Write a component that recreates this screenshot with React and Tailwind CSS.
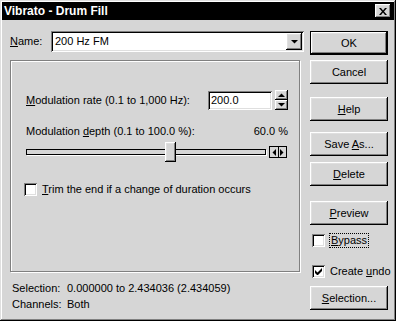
import React from "react";

const raised =
  "shadow-[inset_-1px_-1px_#000,inset_1px_1px_#fff,inset_-2px_-2px_#808080,inset_2px_2px_#dfdfdf]";
const sunken =
  "shadow-[inset_1px_1px_#808080,inset_-1px_-1px_#fff,inset_2px_2px_#000,inset_-2px_-2px_#dfdfdf]";

function Btn({ children, def, className = "" }) {
  if (def) {
    return (
      <div className={`border border-black ${className}`}>
        <div className={`flex h-[22px] items-center justify-center bg-[#d6d6d6] ${raised}`}>
          {children}
        </div>
      </div>
    );
  }
  return (
    <div className={`flex h-[24px] items-center justify-center bg-[#d6d6d6] ${raised} ${className}`}>
      {children}
    </div>
  );
}

function Check({ checked }) {
  return (
    <div className={`relative h-[13px] w-[13px] shrink-0 bg-white ${sunken}`}>
      {checked && (
        <svg className="absolute left-[3px] top-[3px]" width="7" height="7" viewBox="0 0 7 7">
          <path d="M0 2v3l2 2h1l4-4V0L2.5 4.5z" fill="#000" />
        </svg>
      )}
    </div>
  );
}

function Tri({ dir }) {
  const d = {
    up: "M0 4h7L3.5 0.5z",
    down: "M0 0h7L3.5 3.5z",
  }[dir];
  return (
    <svg width="7" height="4" viewBox="0 0 7 4">
      <path d={d} fill="#000" />
    </svg>
  );
}

export default function App() {
  return (
    <div
      className="flex h-[321px] w-[396px] flex-col whitespace-nowrap bg-[#d6d6d6] p-[2px] text-[11px] leading-[13px] text-black shadow-[inset_-1px_-1px_#000,inset_1px_1px_#dfdfdf,inset_-2px_-2px_#808080,inset_2px_2px_#fff]"
      style={{ fontFamily: '"Liberation Sans", Arial, sans-serif' }}
    >
      <div className="flex h-[18px] items-center justify-between bg-black pl-[2px] pr-[3px]">
        <span className="text-[12px] font-bold text-white">Vibrato - Drum Fill</span>
        <div className={`flex h-[14px] w-[16px] items-center justify-center bg-[#d6d6d6] ${raised}`}>
          <svg width="8" height="7" viewBox="0 0 8 7">
            <path d="M0 0h2l2 2.5L6 0h2L5 3.5 8 7H6L4 4.5 2 7H0l3-3.5z" fill="#000" />
          </svg>
        </div>
      </div>

      <div className="flex flex-1 pl-[8px] pr-[6px] pt-[11px]">
        <div className="flex w-[294px] flex-col">
          <div className="flex items-center">
            <span className="w-[41px]">
              <span className="underline">N</span>ame:
            </span>
            <div className={`flex h-[21px] flex-1 items-center bg-white pl-[4px] pr-[2px] ${sunken}`}>
              <span className="flex-1">200 Hz FM</span>
              <div className={`flex h-[17px] w-[16px] items-center justify-center bg-[#d6d6d6] ${raised}`}>
                <Tri dir="down" />
              </div>
            </div>
          </div>

          <div className="mr-[4px] mt-[8px] flex h-[212px] flex-col border border-[#808080] pl-[15px] pr-[11px] pt-[29px] shadow-[inset_1px_1px_#fff,1px_1px_#fff]">
            <div className="flex items-center justify-between">
              <span>
                <span className="underline">M</span>odulation rate (0.1 to 1,000 Hz):
              </span>
              <div className="flex items-center gap-[3px]">
                <div className={`flex h-[19px] w-[64px] items-center bg-white px-[3px] ${sunken}`}>200.0</div>
                <div className="flex flex-col">
                  <div className={`flex h-[10px] w-[13px] items-center justify-center bg-[#d6d6d6] ${raised}`}>
                    <Tri dir="up" />
                  </div>
                  <div className={`flex h-[10px] w-[13px] items-center justify-center bg-[#d6d6d6] ${raised}`}>
                    <Tri dir="down" />
                  </div>
                </div>
              </div>
            </div>

            <div className="mt-[15px] flex justify-between">
              <span>
                Modulation <span className="underline">d</span>epth (0.1 to 100.0 %):
              </span>
              <span>60.0 %</span>
            </div>

            <div className="mt-[4px] flex h-[20px] items-center">
              <div className="relative h-[6px] w-[240px] border border-black bg-[#d6d6d6] shadow-[1px_1px_#fff]">
                <div className={`absolute left-[138px] top-[-8px] h-[20px] w-[11px] bg-[#d6d6d6] ${raised}`} />
              </div>
              <div className="ml-[3px] flex h-[12px] w-[18px] items-center border border-black bg-[#d6d6d6]">
                <div className="flex flex-1 items-center justify-center">
                  <svg width="4" height="7" viewBox="0 0 4 7">
                    <path d="M4 0v7L0.5 3.5z" fill="#000" />
                  </svg>
                </div>
                <div className="h-full w-px bg-black" />
                <div className="flex flex-1 items-center justify-center">
                  <svg width="4" height="7" viewBox="0 0 4 7">
                    <path d="M0 0v7L3.5 3.5z" fill="#000" />
                  </svg>
                </div>
              </div>
            </div>

            <div className="mt-[21px] flex items-center gap-[5px]">
              <div className="-ml-[2px]">
                <Check />
              </div>
              <span>
                <span className="underline">T</span>rim the end if a change of duration occurs
              </span>
            </div>
          </div>

          <div className="mt-[8px] flex flex-col pl-[2px] leading-[16px]">
            <div className="flex">
              <span className="w-[55px]">Selection:</span>
              <span>0.000000 to 2.434036 (2.434059)</span>
            </div>
            <div className="flex">
              <span className="w-[55px]">Channels:</span>
              <span>Both</span>
            </div>
          </div>
        </div>

        <div className="ml-[6px] flex w-[78px] flex-col">
          <Btn def>OK</Btn>
          <Btn className="mt-[5px]">Cancel</Btn>
          <Btn className="mt-[13px]">
            <span>
              <span className="underline">H</span>elp
            </span>
          </Btn>
          <Btn className="mt-[11px]">
            <span>
              Save <span className="underline">A</span>s...
            </span>
          </Btn>
          <Btn className="mt-[6px]">
            <span>
              <span className="underline">D</span>elete
            </span>
          </Btn>
          <Btn className="mt-[15px]">
            <span>
              <span className="underline">P</span>review
            </span>
          </Btn>
          <div className="mt-[8px] flex items-center gap-[4px] pl-[2px]">
            <Check />
            <span className="border border-dotted border-black px-[1px]">
              <span className="underline">B</span>ypass
            </span>
          </div>
          <div className="mt-[17px] flex items-center gap-[5px] pl-[2px]">
            <Check checked />
            <span>
              Create <span className="underline">u</span>ndo
            </span>
          </div>
          <Btn className="mt-[8px]">
            <span>
              <span className="underline">S</span>election...
            </span>
          </Btn>
        </div>
      </div>
    </div>
  );
}
